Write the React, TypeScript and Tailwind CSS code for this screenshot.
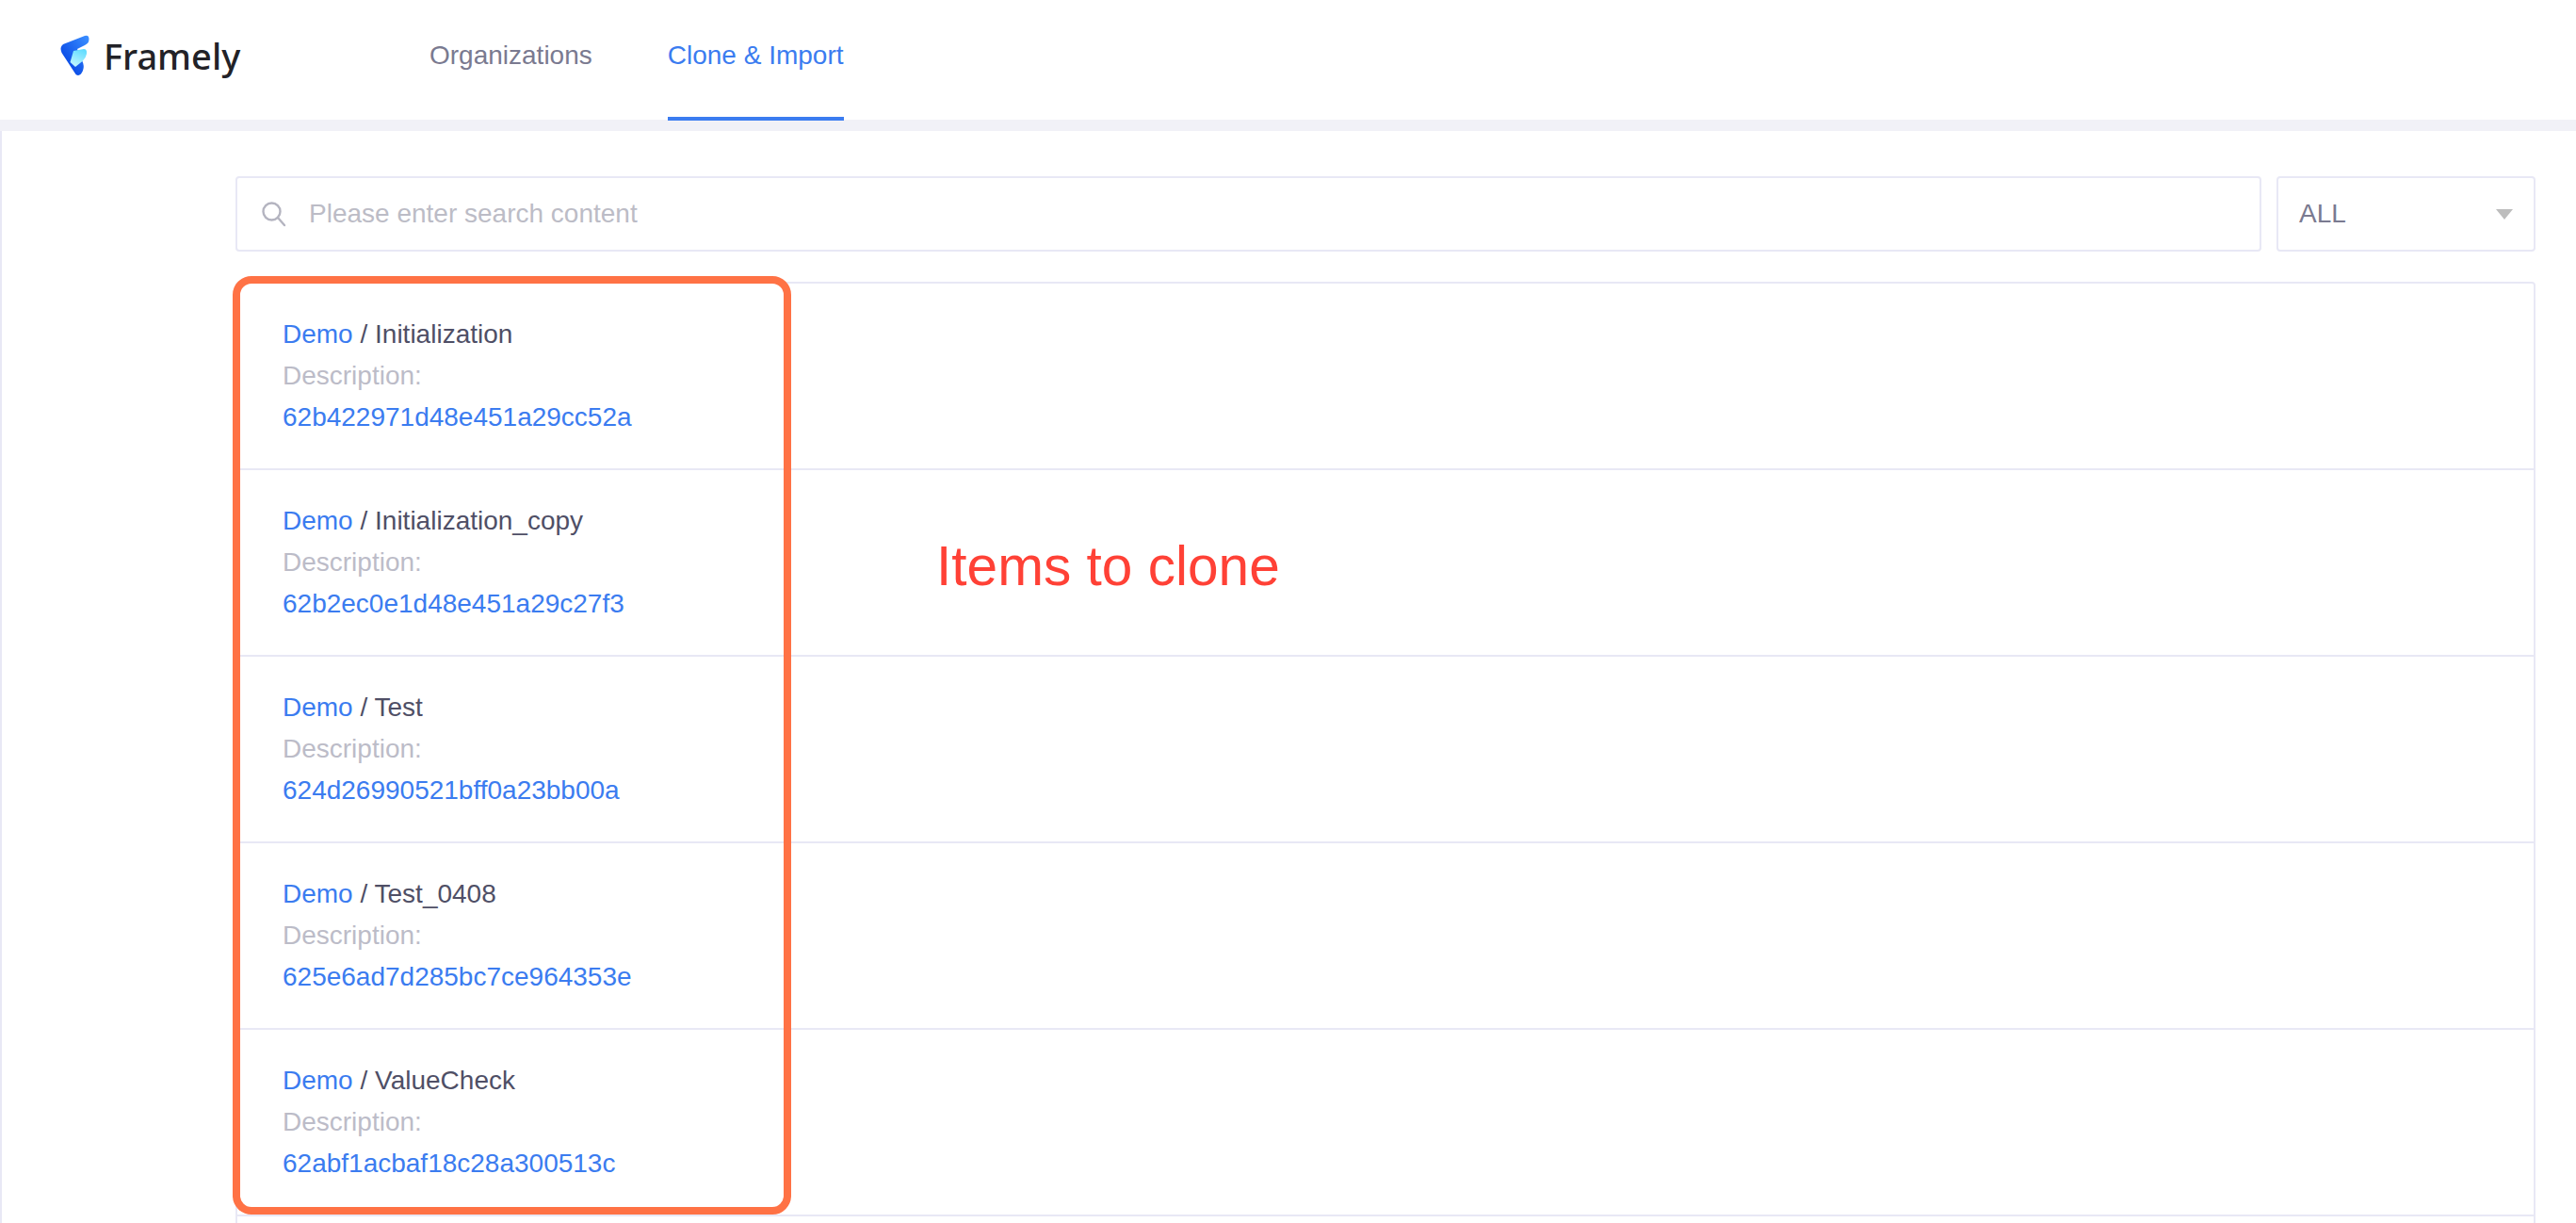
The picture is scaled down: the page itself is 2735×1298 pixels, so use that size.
import React from "react";

const rows = [
  ["Initialization", "62b422971d48e451a29cc52a"],
  ["Initialization_copy", "62b2ec0e1d48e451a29c27f3"],
  ["Test", "624d26990521bff0a23bb00a"],
  ["Test_0408", "625e6ad7d285bc7ce964353e"],
  ["ValueCheck", "62abf1acbaf18c28a300513c"],
];

function Logo() {
  return (
    <svg width="36" height="48" viewBox="0 0 36 48" className="shrink-0" aria-hidden="true">
      <defs>
        <linearGradient id="lg1" x1="0.9" y1="0" x2="0.2" y2="0.7">
          <stop offset="0" stopColor="#3a8dff" />
          <stop offset="1" stopColor="#0b4ce6" />
        </linearGradient>
        <linearGradient id="lg2" x1="0.7" y1="0" x2="0.3" y2="1">
          <stop offset="0" stopColor="#5fdcff" />
          <stop offset="1" stopColor="#c4f7ff" />
        </linearGradient>
      </defs>
      <path d="M5 12 L28 3 Q32.5 1.5 32.5 6.5 Q32.5 11 28 13 L20 17 L25 29 Q28 35 26 40 Q23 47 18.5 44 L3.5 21 Q1 15 5 12 Z" fill="url(#lg1)" />
      <path d="M16 19 L27 17 Q30.5 17 30 22 Q29.5 26 25.5 30 L18 36 L12.5 31 Z" fill="url(#lg2)" />
    </svg>
  );
}

export default function App() {
  return (
    <div className="relative h-[1298px] overflow-hidden bg-white font-['Liberation_Sans',Arial,sans-serif] text-[28px] leading-[44px]">
      <header className="flex h-[127px] items-stretch bg-white">
        <div className="flex w-[456px] items-center pl-[62px] pb-[9px]">
          <Logo />
          <span className="ml-[12px] font-['Noto_Sans',sans-serif] text-[38px] leading-[48px] font-medium text-[#222227]">Framely</span>
        </div>
        <nav className="flex items-stretch gap-[80px]">
          <div className="flex items-center pb-[10px] text-[#7a7a90]">Organizations</div>
          <div className="-mb-px flex items-center border-b-4 border-[#3b7cf0] pb-[6px] text-[#3b7cf0]">Clone &amp; Import</div>
        </nav>
      </header>
      <div className="h-[12px] bg-[#f1f1f7]" />
      <main className="border-l-2 border-[#e8e8f5] pl-[248px] pr-[43px] pt-[48px]">
        <div className="flex gap-[16px]">
          <div className="flex h-[80px] flex-1 items-center rounded border-2 border-[#e8e8f5] pl-[25px]">
            <svg width="28" height="28" viewBox="0 0 28 28" fill="none" stroke="#b4b4c0" strokeWidth="2.4" className="shrink-0" aria-hidden="true">
              <circle cx="11.5" cy="11.5" r="9" />
              <path d="M18 18 L25 26" strokeLinecap="round" />
            </svg>
            <span className="ml-[23px] text-[#bcbcc6]">Please enter search content</span>
          </div>
          <div className="flex h-[80px] w-[275px] items-center justify-between rounded border-2 border-[#e8e8f5] pl-[22px] pr-[22px]">
            <span className="text-[#7a7a90]">ALL</span>
            <svg width="18" height="11" viewBox="0 0 18 11" aria-hidden="true">
              <path d="M0 0 H18 L9 11 Z" fill="#bdbdbd" />
            </svg>
          </div>
        </div>
        <div className="mt-[32px] rounded border-2 border-[#e8e8f5]">
          {rows.map(([name, id]) => (
            <div key={name} className="h-[198px] border-b-2 border-[#e8e8f5] pl-[48px] pt-[32px]">
              <div className="text-[#4f4f66]">
                <span className="text-[#3b7cf0]">Demo</span> / {name}
              </div>
              <div className="text-[#bcbcc8]">Description:</div>
              <div className="text-[#3b7cf0]">{id}</div>
            </div>
          ))}
          <div className="h-[198px]" />
        </div>
      </main>
      <div className="absolute left-[247px] top-[293px] h-[996px] w-[593px] rounded-[20px] border-[8px] border-[#ff7245]" />
      <div className="absolute left-[994px] top-[566px] text-[58.6px] leading-[70px] text-[#ff4136]">Items to clone</div>
    </div>
  );
}
